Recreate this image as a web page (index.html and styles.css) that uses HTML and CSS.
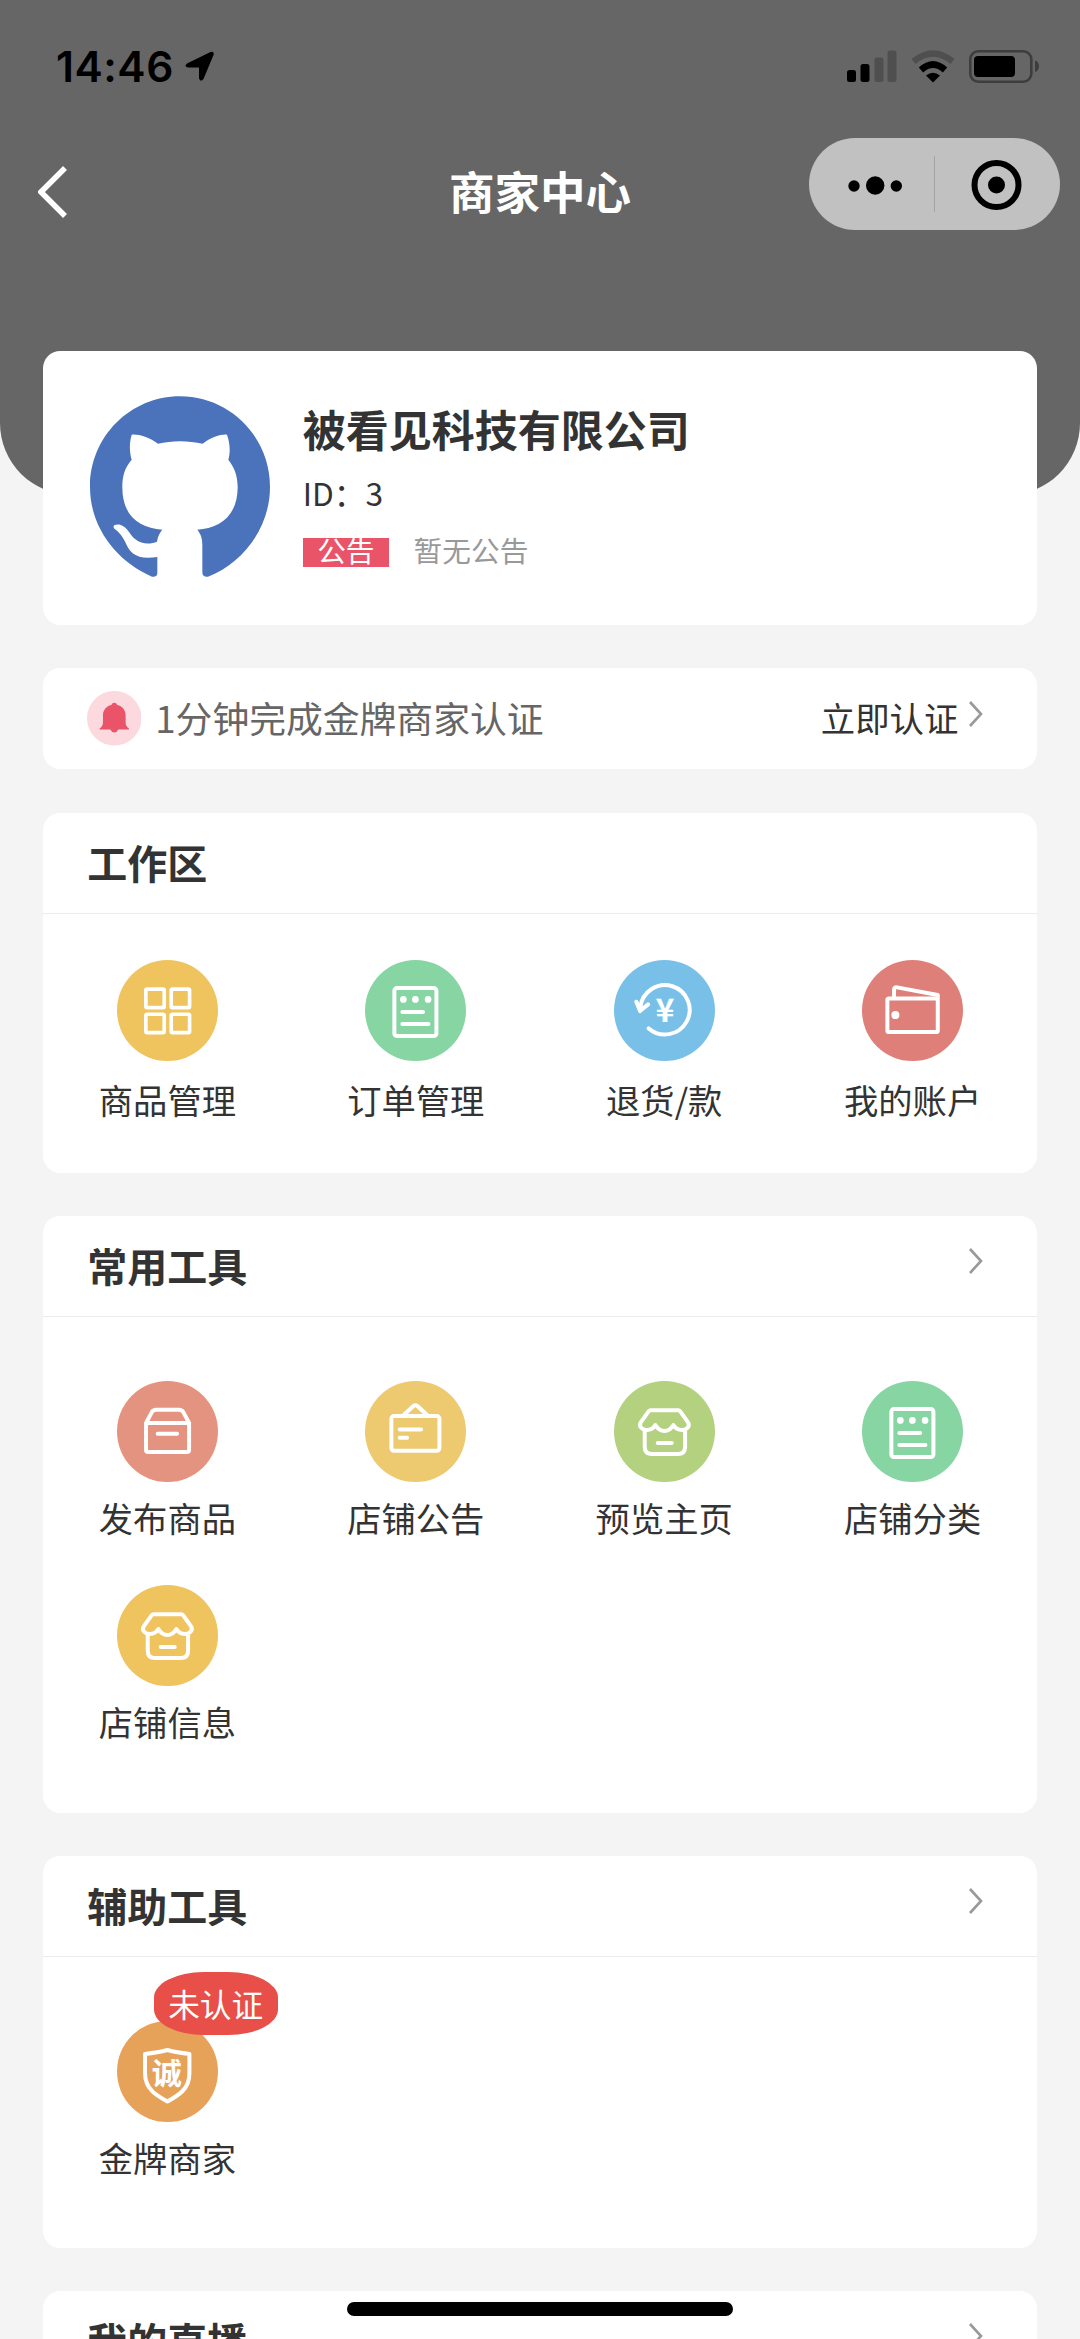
FILE: index.html
```html
<!DOCTYPE html>
<html lang="zh-CN">
<head>
<meta charset="utf-8">
<title>商家中心</title>
<link rel="stylesheet" href="styles.css">
</head>
<body>
<svg class="defs" width="0" height="0">
  <symbol id="i-grid" viewBox="0 0 302 302">
    <g stroke-width="11"><rect x="86.5" y="87.5" width="55" height="55" rx="4"/><rect x="162.5" y="87.5" width="55" height="55" rx="4"/><rect x="86.5" y="162.5" width="55" height="55" rx="4"/><rect x="162.5" y="162.5" width="55" height="55" rx="4"/></g>
  </symbol>
  <symbol id="i-list" viewBox="0 0 302 302">
    <rect x="88" y="84" width="126" height="144" rx="8"/>
    <path d="M112 156h62M112 192h78"/>
    <g fill="#fff" stroke="none"><circle cx="115" cy="118" r="10"/><circle cx="151" cy="118" r="10"/><circle cx="189" cy="118" r="10"/></g>
  </symbol>
  <symbol id="i-wallet" viewBox="0 0 302 302">
    <rect x="76" y="115" width="151" height="101" rx="5"/>
    <path d="M96 112V90q0-9 9-8l122 23v8"/>
    <circle cx="100" cy="165" r="12" fill="#fff" stroke="none"/>
  </symbol>
  <symbol id="i-box" viewBox="0 0 302 302">
    <path d="M87 126l17-32q4-8 13-8h69q9 0 13 8l17 32v80q0 7-7 7H94q-7 0-7-7zM87 126h129M122 158h58"/>
  </symbol>
  <symbol id="i-board" viewBox="0 0 302 302">
    <rect x="79" y="105" width="144" height="104" rx="8"/>
    <path d="M116 102l29-27q6-5 12 0l29 27M104 145h64M104 170h22"/>
  </symbol>
  <symbol id="i-shop" viewBox="0 0 302 302">
    <path d="M109 88h84q4 0 7 5l22 31c7 12-5 23-19 23-10 0-19-5-25-15-7 12-16 18-27 18s-20-6-27-18c-6 10-15 15-25 15-14 0-26-11-19-23l22-31q3-5 7-5zM92 147v50q0 22 22 22h77q22 0 22-22v-50M131 186h42"/>
  </symbol>
  <symbol id="i-arrow" viewBox="0 0 16 28"><path d="M2 2l11 12L2 26"/></symbol>
</svg>

<div class="page">
  <header class="top">
    <div class="status">
      <div class="status-left">
        <span class="time">14:46</span>
        <svg width="30" height="30" viewBox="0 0 30 30"><path d="M2 12.500L25.500 1Q29.500-.2 28.600 3.800L18.500 28Q15.500 31.500 14 27.500V16.500H3Q-1.500 15.500 2 12.500z"/></svg>
      </div>
      <div class="status-right">
        <svg width="50" height="33" viewBox="0 0 50 33"><rect y="20" width="9" height="12" rx="2.500"/><rect x="13.500" y="14" width="9" height="18" rx="2.500"/><g fill="#4f4f4f"><rect x="27.500" y="7.500" width="9" height="24.500" rx="2.500"/><rect x="40.500" y="0.500" width="9" height="31.500" rx="2.500"/></g></svg>
        <svg width="44" height="33" viewBox="0 0 44 33"><g fill="none" stroke-width="6.500"><path d="M2.500 11.500Q22-4.500 41.500 11.500" stroke="#4f4f4f"/><path d="M10 20Q22 9 34 20" stroke="#000"/></g><path d="M15 25.500Q22 20 29 25.500L22 32.500z"/></svg>
        <svg width="72" height="33" viewBox="0 0 72 33"><rect x="1.300" y="1.300" width="61" height="30.400" rx="8" fill="none" stroke="#3d3d3d" stroke-width="2.600"/><rect x="5" y="6" width="41" height="21" rx="4"/><path d="M66 10.500q4 1 4 5.800t-4 5.800z" fill="#3d3d3d"/></svg>
      </div>
    </div>
    <nav class="nav">
      <svg class="back" width="30" height="52" viewBox="0 0 30 52"><path d="M27 2L3 26l24 24"/></svg>
      <h1 class="nav-title">商家中心</h1>
      <div class="capsule">
        <svg width="125" height="92" viewBox="0 0 125 92"><circle cx="45" cy="47" r="5.700"/><circle cx="66.200" cy="46.500" r="9.200"/><circle cx="87.300" cy="47" r="5.700"/></svg>
        <i class="capsule-line"></i>
        <svg width="125" height="92" viewBox="0 0 125 92"><circle cx="62.500" cy="46" r="22" fill="none" stroke="#000" stroke-width="6"/><circle cx="62.500" cy="46" r="8.500"/></svg>
      </div>
    </nav>
  </header>

  <main class="content">
    <section class="card profile">
      <svg class="avatar" width="180" height="182" viewBox="30 31 540 546"><path fill="#4b73bc" d="M300 32C151 32 30 153 30 304c0 120 78 222 186 269q16 2 16-11v-48c-62 10-82-14-92-36-10-23-22-38-36-48-10-10 4-16 18-12 23 8 28 32 43 42 25 20 50 14 66 8 2-16 9-28 16-36-67-6-120-38-120-127 0-35 8-60 28-83-5-17-9-44 0-75 20-2 50 6 79 27 41-10 91-10 134 0 27-21 57-29 73-27 11 31 9 58 4 75 18 23 28 48 28 83 0 89-58 123-121 127 10 13 15 23 15 48v80q0 15 17 13C492 530 570 424 570 304 570 153 449 32 300 32z"/></svg>
      <div class="profile-info">
        <h2 class="name">被看见科技有限公司</h2>
        <p class="pid">ID：3</p>
        <div class="bulletin"><span class="tag">公告</span><span class="bulletin-text">暂无公告</span></div>
      </div>
    </section>

    <section class="card notice">
      <svg class="bell" width="54.600" height="54.600" viewBox="0 0 164 164"><circle cx="82" cy="82" r="82" fill="#fbd9de"/><path fill="#ea5468" d="M82 35q7 0 8 6c17 5 26 16 26 32v20c0 10 3 14 10 20v3H94q-4 9-12 9t-12-9H38v-3c7-6 10-10 10-20V73c0-16 9-27 26-32q1-6 8-6z"/></svg>
      <span class="notice-text">1分钟完成金牌商家认证</span>
      <span class="notice-link">立即认证</span>
      <svg class="arrow"><use href="#i-arrow"/></svg>
    </section>

    <section class="card work">
      <div class="card-head"><h3>工作区</h3></div>
      <div class="tiles">
        <div class="tile"><svg class="icon yellow"><use href="#i-grid"/></svg><span>商品管理</span></div>
        <div class="tile"><svg class="icon green"><use href="#i-list"/></svg><span>订单管理</span></div>
        <div class="tile">
          <svg class="icon blue" viewBox="0 0 302 302"><path d="M104 205A74 74 0 1 0 79 142M67 125l11 28 24-20"/><text x="153" y="187" class="yen">¥</text></svg>
          <span>退货/款</span>
        </div>
        <div class="tile"><svg class="icon red"><use href="#i-wallet"/></svg><span>我的账户</span></div>
      </div>
    </section>

    <section class="card common">
      <div class="card-head"><h3>常用工具</h3><svg class="arrow"><use href="#i-arrow"/></svg></div>
      <div class="tiles">
        <div class="tile"><svg class="icon salmon"><use href="#i-box"/></svg><span>发布商品</span></div>
        <div class="tile"><svg class="icon sand"><use href="#i-board"/></svg><span>店铺公告</span></div>
        <div class="tile"><svg class="icon lime"><use href="#i-shop"/></svg><span>预览主页</span></div>
        <div class="tile"><svg class="icon green"><use href="#i-list"/></svg><span>店铺分类</span></div>
        <div class="tile"><svg class="icon yellow"><use href="#i-shop"/></svg><span>店铺信息</span></div>
      </div>
    </section>

    <section class="card helper">
      <div class="card-head"><h3>辅助工具</h3><svg class="arrow"><use href="#i-arrow"/></svg></div>
      <div class="tiles">
        <div class="tile">
          <svg class="icon orange" viewBox="0 0 302 302"><path d="M84 99c25-3 48-7 67-12 19 5 42 9 66 12v58c0 48-35 67-66 84-31-17-67-36-67-84z"/><text x="149" y="190" class="cheng">诚</text></svg>
          <span>金牌商家</span><b class="badge">未认证</b>
        </div>
      </div>
    </section>

    <section class="card live">
      <div class="card-head"><h3>我的直播</h3><svg class="arrow"><use href="#i-arrow"/></svg></div>
    </section>
  </main>
  <div class="home-indicator"></div>
</div>
</body>
</html>
```
FILE: styles.css
```css
* { box-sizing: border-box; margin: 0; padding: 0; }
body {
  background: #f4f4f4;
  color: #333;
  font-family: "Noto Sans CJK SC", sans-serif;
}
svg { display: block; flex: none; }
.defs { position: absolute; }
.page { position: relative; width: 1080px; height: 2339px; overflow: hidden; }

.top {
  height: 495.400px;
  background: #666;
  border-radius: 0 0 72px 72px;
}
.status {
  height: 138px;
  padding: 50px 39px 0 56px;
  display: flex;
  justify-content: space-between;
  align-items: flex-start;
}
.status-left { display: flex; align-items: flex-start; gap: 11px; }
.status-left svg { margin-top: 1px; }
.time { font: 600 42.500px/33px Inter, sans-serif; letter-spacing: 0.500px; color: #000; }
.status-right { display: flex; gap: 14px; }
.nav {
  height: 92px;
  padding: 0 38px;
  display: grid;
  grid-template-columns: 1fr auto 1fr;
  align-items: center;
}
.back { margin-top: 15px; fill: none; stroke: #fff; stroke-width: 5.500; }
.nav-title { font-size: 45.500px; line-height: 60px; font-weight: 700; color: #fff; padding-top: 12px; }
.capsule {
  justify-self: end;
  width: 250.500px;
  height: 92px;
  margin-right: -17.600px;
  border-radius: 46px;
  background: #c1c1c1;
  display: flex;
  align-items: center;
}
.capsule svg { margin-top: 1px; }
.capsule-line { width: 1px; height: 56px; background: #a3a3a3; margin: 0 -0.500px; }

.content {
  margin-top: -144px;
  padding: 0 43.200px;
  display: flex;
  flex-direction: column;
  gap: 43.400px;
}
.card { background: #fff; border-radius: 17.300px; flex: none; }

.profile { height: 273.600px; padding: 45px 46.500px; display: flex; gap: 33px; }
.name { font-size: 43px; line-height: 60px; font-weight: 700; margin-top: 2px; }
.pid { font-size: 31.700px; line-height: 46px; margin-top: 11px; }
.bulletin { display: flex; align-items: center; gap: 24.500px; margin-top: 18px; height: 38px; font-size: 28.700px; }
.tag { width: 86.400px; height: 29px; line-height: 24px; overflow: hidden; background: #ea5468; color: #fff; text-align: center; }
.bulletin-text { color: #999; line-height: 30px; margin-top: -5px; }

.notice { height: 100.800px; padding: 0 52.500px 0 43.400px; display: flex; align-items: center; }
.notice-text { flex: 1; margin-left: 14px; font-size: 36.800px; color: #666; line-height: 48px; margin-top: -4px; }
.notice-link { font-size: 34.400px; line-height: 48px; margin-top: -4px; margin-right: 10px; }
.arrow { width: 16px; height: 28px; fill: none; stroke: #999; stroke-width: 2.600; margin-top: -10px; }

.card-head {
  height: 101px;
  padding: 0 52.500px 0 44px;
  border-bottom: 1px solid #ececec;
  display: flex;
  align-items: center;
  justify-content: space-between;
}
.card-head h3 { font-size: 40px; line-height: 56px; font-weight: 600; margin-top: -2px; }
.tiles { display: grid; grid-template-columns: repeat(4, 1fr); row-gap: 47.900px; }
.tile { position: relative; display: flex; flex-direction: column; align-items: center; gap: 15.300px; }
.tile span { font-size: 34.300px; line-height: 40px; }
.icon {
  width: 100.800px;
  height: 100.800px;
  border-radius: 50%;
  fill: none;
  stroke: #fff;
  stroke-width: 12;
  stroke-linecap: round;
  stroke-linejoin: round;
}
.yen, .cheng { fill: #fff; stroke: none; text-anchor: middle; font-weight: 700; }
.yen { font-size: 96px; }
.cheng { font-size: 90px; }
.yellow { background: #efc35e; }
.green { background: #86d5a3; }
.blue { background: #79c0e9; }
.red { background: #df7f79; }
.salmon { background: #e49380; }
.sand { background: #edc970; }
.lime { background: #b3d17f; }
.orange { background: #e7a25a; }

.work { height: 360.400px; }
.work .tiles { padding-top: 46.500px; }
.work .tile { gap: 18.500px; }
.common { height: 596.200px; }
.common .tiles { padding-top: 63.800px; }
.helper { height: 392px; }
.helper .tiles { padding-top: 63.800px; }
.live { height: 200px; }
.badge {
  position: absolute;
  left: 110.500px;
  top: -49px;
  width: 124px;
  height: 63.700px;
  border-radius: 40%;
  background: #e84f48;
  color: #fff;
  font-size: 31.680px;
  line-height: 62px;
  font-weight: 400;
  text-align: center;
}
.home-indicator {
  position: absolute;
  left: 347px;
  top: 2302px;
  width: 386px;
  height: 14px;
  border-radius: 7px;
  background: #000;
}
```
